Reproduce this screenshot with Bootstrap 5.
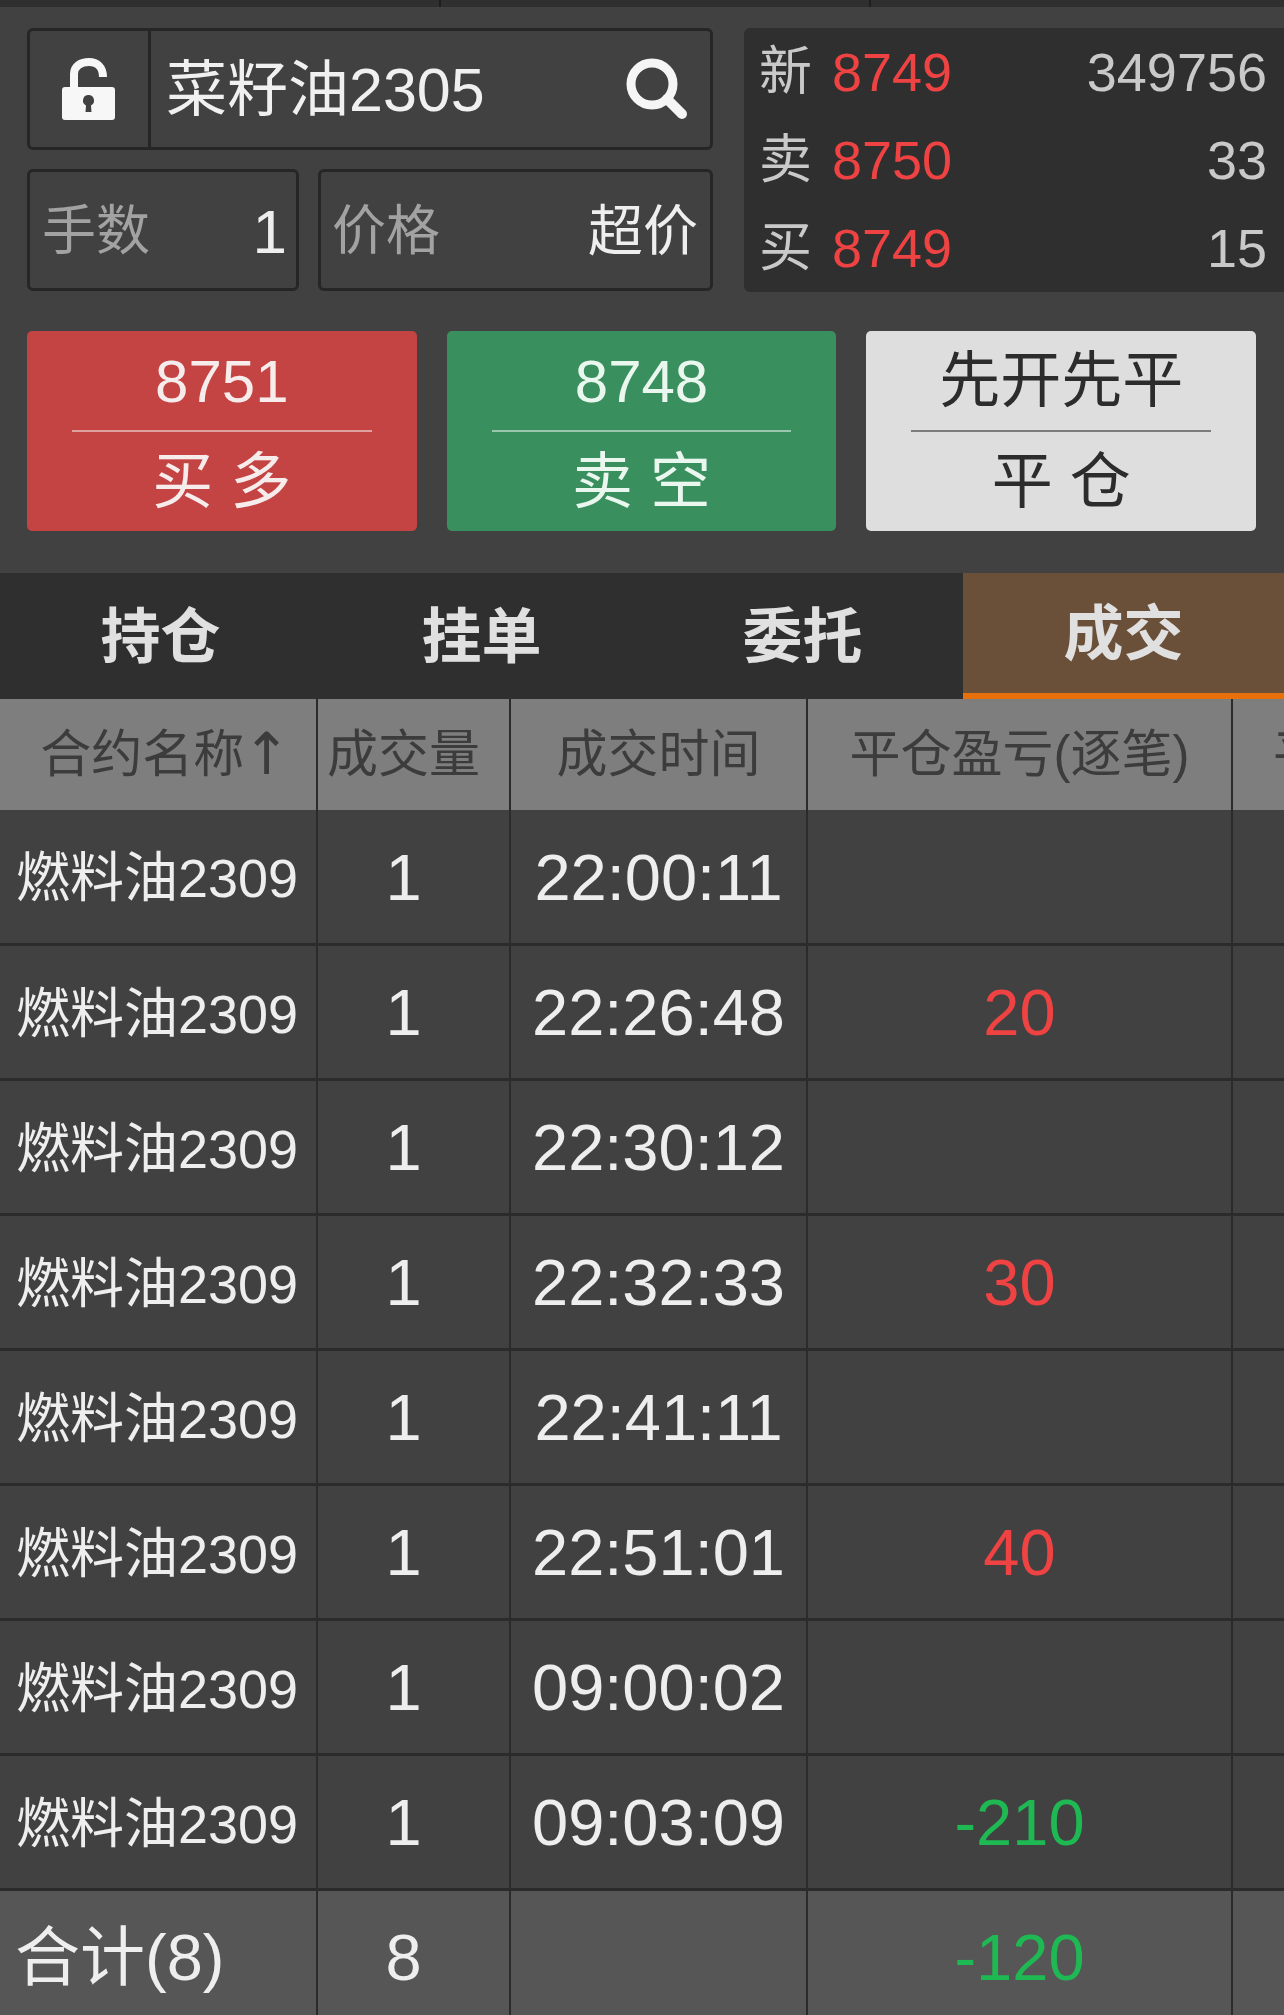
<!DOCTYPE html>
<html lang="zh">
<head>
<meta charset="utf-8">
<title>成交</title>
<link href="https://cdn.jsdelivr.net/npm/bootstrap@5.3.0/dist/css/bootstrap.min.css" rel="stylesheet">
<style>
html,body{margin:0;background:#414141;}
body{font-family:"Liberation Sans","Noto Sans CJK SC",sans-serif;color:#eee;width:1284px;height:2015px;overflow:hidden;}
.topstrip{height:7px;background:#2f2f2f;}
.topstrip>div{border-right:2px solid #1f1f1f;}
.stripa{width:441px;}
.stripb{width:430px;}
.topstrip>div:last-child{border-right:0;}
.upper{padding:21px 0 0 27px;gap:31px;}
.leftcol{width:686px;gap:19px;}
.framebox{height:122px;border:3px solid #262626;border-radius:6px;}
.lockcell{width:121px;border-right:3px solid #262626;}
.namecell{font-size:61px;padding:0 22px 0 15px;color:#f0f0f0;}
.nametext{padding-top:4px;}
.lotbox{width:272px;padding:3px 9px 0 12px;}
.pricebox{width:395px;padding:3px 12px 0 11px;}
.dimtext{font-size:54px;color:#a2a2a2;}
.boxval{font-size:55px;color:#eee;line-height:1;}
.bigone{font-size:62px;}
.quotepanel{width:540px;height:264px;background:#2f2f2f;border-radius:6px 0 0 6px;padding:0 17px 0 15px;font-size:54px;color:#c9c9c9;}
.quoteline{height:88px;}
.quotelabel{font-size:53px;width:73px;}
.redval{color:#ef4343;}
.greenval{color:#1fb954;}
.actions{padding:39px 28px 0 27px;gap:30px;}
.tradebtn{width:390px;height:200px;padding:0;border:0;border-radius:5px;font-size:61px;line-height:1;}
.tradebtn:hover,.tradebtn:active{color:inherit;}
.btnhalf{height:100px;padding-top:2px;}
.btnnum{font-size:60px;}
.btnrule{height:2px;margin:0 45px;opacity:.55;background:currentColor;}
.buybtn,.buybtn:hover{background:#c44343;color:#f7ecec;}
.sellbtn,.sellbtn:hover{background:#3a8f5f;color:#eaf7ee;}
.closebtn,.closebtn:hover{background:#dedede;color:#2c2c2c;}
.tabstrip{margin-top:42px;background:#2f2f2f;height:126px;}
.tabcell{font-size:60px;font-weight:700;color:#e0e0e0;padding-top:3px;}
.tabactive{background:#6b5039;border-bottom:6px solid #e8700a;}
.deals{table-layout:fixed;width:1284px;margin:0;--bs-table-bg:#414141;--bs-table-color:#eee;--bs-border-color:#2b2b2b;}
.deals th,.deals td{padding:0;text-align:center;vertical-align:middle;border-right:2px solid #2b2b2b;white-space:nowrap;overflow:hidden;}
.deals th:last-child,.deals td:last-child{border-right:0;}
.deals thead th{background-color:#7e7e7e;--bs-table-bg:#7e7e7e;color:#3c3c3c;height:111px;font-size:51px;font-weight:400;border-bottom:0;padding-top:2px;}
.deals thead th.firstcol{padding-left:6px;}
.deals tbody td{height:135px;font-size:65px;border-bottom:3px solid #2b2b2b;line-height:1;padding-top:2px;}
.deals tbody tr:first-child td{height:134px;}
.deals th.qtycol,.deals td.qtycol{padding-right:20px;}
.deals tbody td.namecol{font-size:54px;text-align:left;padding-left:16px;padding-top:4px;}
.deals tbody tr.sumrow td{--bs-table-bg:#565656;background-color:#565656;}
.deals tbody tr.sumrow td.namecol{font-size:65px;padding-top:2px;padding-left:15px;}
.deals th.cutcol{text-align:left;padding-left:40px;}
.uparrow{font-family:"DejaVu Sans",sans-serif;font-size:58px;line-height:1;margin:0 -9px 0 -2px;vertical-align:-2px;}
</style>
</head>
<body>
<div class="topstrip d-flex"><div class="stripa"></div><div class="stripb"></div><div class="flex-grow-1"></div></div>

<div class="upper d-flex">
  <div class="leftcol d-flex flex-column">
    <div class="framebox d-flex">
      <div class="lockcell d-flex align-items-center justify-content-center">
        <svg width="54" height="62" viewBox="0 0 54 62" aria-hidden="true">
          <path d="M12 31V16C12 8 19 4 27 4C35 4 41 9 41 19" fill="none" stroke="#f7f7f7" stroke-width="8"/>
          <path fill-rule="evenodd" fill="#f7f7f7" d="M3 29H50Q53 29 53 32V59Q53 62 50 62H3Q0 62 0 59V32Q0 29 3 29ZM26.500 37A5.500 5.500 0 0 0 24 47.400L23.500 54H29.500L29 47.400A5.500 5.500 0 0 0 26.500 37Z"/>
        </svg>
      </div>
      <div class="namecell flex-grow-1 d-flex align-items-center justify-content-between">
        <span class="nametext">菜籽油2305</span>
        <svg width="62" height="62" viewBox="0 0 62 62" aria-hidden="true">
          <circle cx="26" cy="26" r="21" fill="none" stroke="#f5f5f5" stroke-width="9"/>
          <path d="M41 41L56 56" stroke="#f5f5f5" stroke-width="10" stroke-linecap="round"/>
        </svg>
      </div>
    </div>
    <div class="d-flex justify-content-between">
      <div class="framebox lotbox d-flex align-items-center justify-content-between">
        <span class="dimtext">手数</span><span class="boxval bigone">1</span>
      </div>
      <div class="framebox pricebox d-flex align-items-center justify-content-between">
        <span class="dimtext">价格</span><span class="boxval">超价</span>
      </div>
    </div>
  </div>
  <div class="quotepanel d-flex flex-column justify-content-center">
    <div class="quoteline d-flex align-items-center"><span class="quotelabel">新</span><span class="redval">8749</span><span class="ms-auto">349756</span></div>
    <div class="quoteline d-flex align-items-center"><span class="quotelabel">卖</span><span class="redval">8750</span><span class="ms-auto">33</span></div>
    <div class="quoteline d-flex align-items-center"><span class="quotelabel">买</span><span class="redval">8749</span><span class="ms-auto">15</span></div>
  </div>
</div>

<div class="actions d-flex">
  <button type="button" class="btn tradebtn buybtn d-flex flex-column">
    <span class="btnhalf btnnum w-100 d-flex align-items-center justify-content-center">8751</span>
    <span class="btnrule align-self-stretch"></span>
    <span class="btnhalf w-100 d-flex align-items-center justify-content-center">买 多</span>
  </button>
  <button type="button" class="btn tradebtn sellbtn d-flex flex-column">
    <span class="btnhalf btnnum w-100 d-flex align-items-center justify-content-center">8748</span>
    <span class="btnrule align-self-stretch"></span>
    <span class="btnhalf w-100 d-flex align-items-center justify-content-center">卖 空</span>
  </button>
  <button type="button" class="btn tradebtn closebtn d-flex flex-column">
    <span class="btnhalf w-100 d-flex align-items-center justify-content-center">先开先平</span>
    <span class="btnrule align-self-stretch"></span>
    <span class="btnhalf w-100 d-flex align-items-center justify-content-center">平 仓</span>
  </button>
</div>

<div class="tabstrip row g-0">
  <div class="col-3 tabcell d-flex align-items-center justify-content-center">持仓</div>
  <div class="col-3 tabcell d-flex align-items-center justify-content-center">挂单</div>
  <div class="col-3 tabcell d-flex align-items-center justify-content-center">委托</div>
  <div class="col-3 tabcell tabactive d-flex align-items-center justify-content-center">成交</div>
</div>

<table class="table deals">
  <colgroup><col style="width:317px"><col style="width:193px"><col style="width:297px"><col style="width:425px"><col style="width:52px"></colgroup>
  <thead>
    <tr><th class="firstcol">合约名称<span class="uparrow">↑</span></th><th class="qtycol">成交量</th><th>成交时间</th><th>平仓盈亏(逐笔)</th><th class="cutcol">平仓</th></tr>
  </thead>
  <tbody>
    <tr><td class="namecol">燃料油2309</td><td class="qtycol">1</td><td>22:00:11</td><td></td><td></td></tr>
    <tr><td class="namecol">燃料油2309</td><td class="qtycol">1</td><td>22:26:48</td><td class="redval">20</td><td></td></tr>
    <tr><td class="namecol">燃料油2309</td><td class="qtycol">1</td><td>22:30:12</td><td></td><td></td></tr>
    <tr><td class="namecol">燃料油2309</td><td class="qtycol">1</td><td>22:32:33</td><td class="redval">30</td><td></td></tr>
    <tr><td class="namecol">燃料油2309</td><td class="qtycol">1</td><td>22:41:11</td><td></td><td></td></tr>
    <tr><td class="namecol">燃料油2309</td><td class="qtycol">1</td><td>22:51:01</td><td class="redval">40</td><td></td></tr>
    <tr><td class="namecol">燃料油2309</td><td class="qtycol">1</td><td>09:00:02</td><td></td><td></td></tr>
    <tr><td class="namecol">燃料油2309</td><td class="qtycol">1</td><td>09:03:09</td><td class="greenval">-210</td><td></td></tr>
    <tr class="sumrow"><td class="namecol">合计(8)</td><td class="qtycol">8</td><td></td><td class="greenval">-120</td><td></td></tr>
  </tbody>
</table>
<script src="https://cdn.jsdelivr.net/npm/bootstrap@5.3.0/dist/js/bootstrap.bundle.min.js"></script>
</body>
</html>
